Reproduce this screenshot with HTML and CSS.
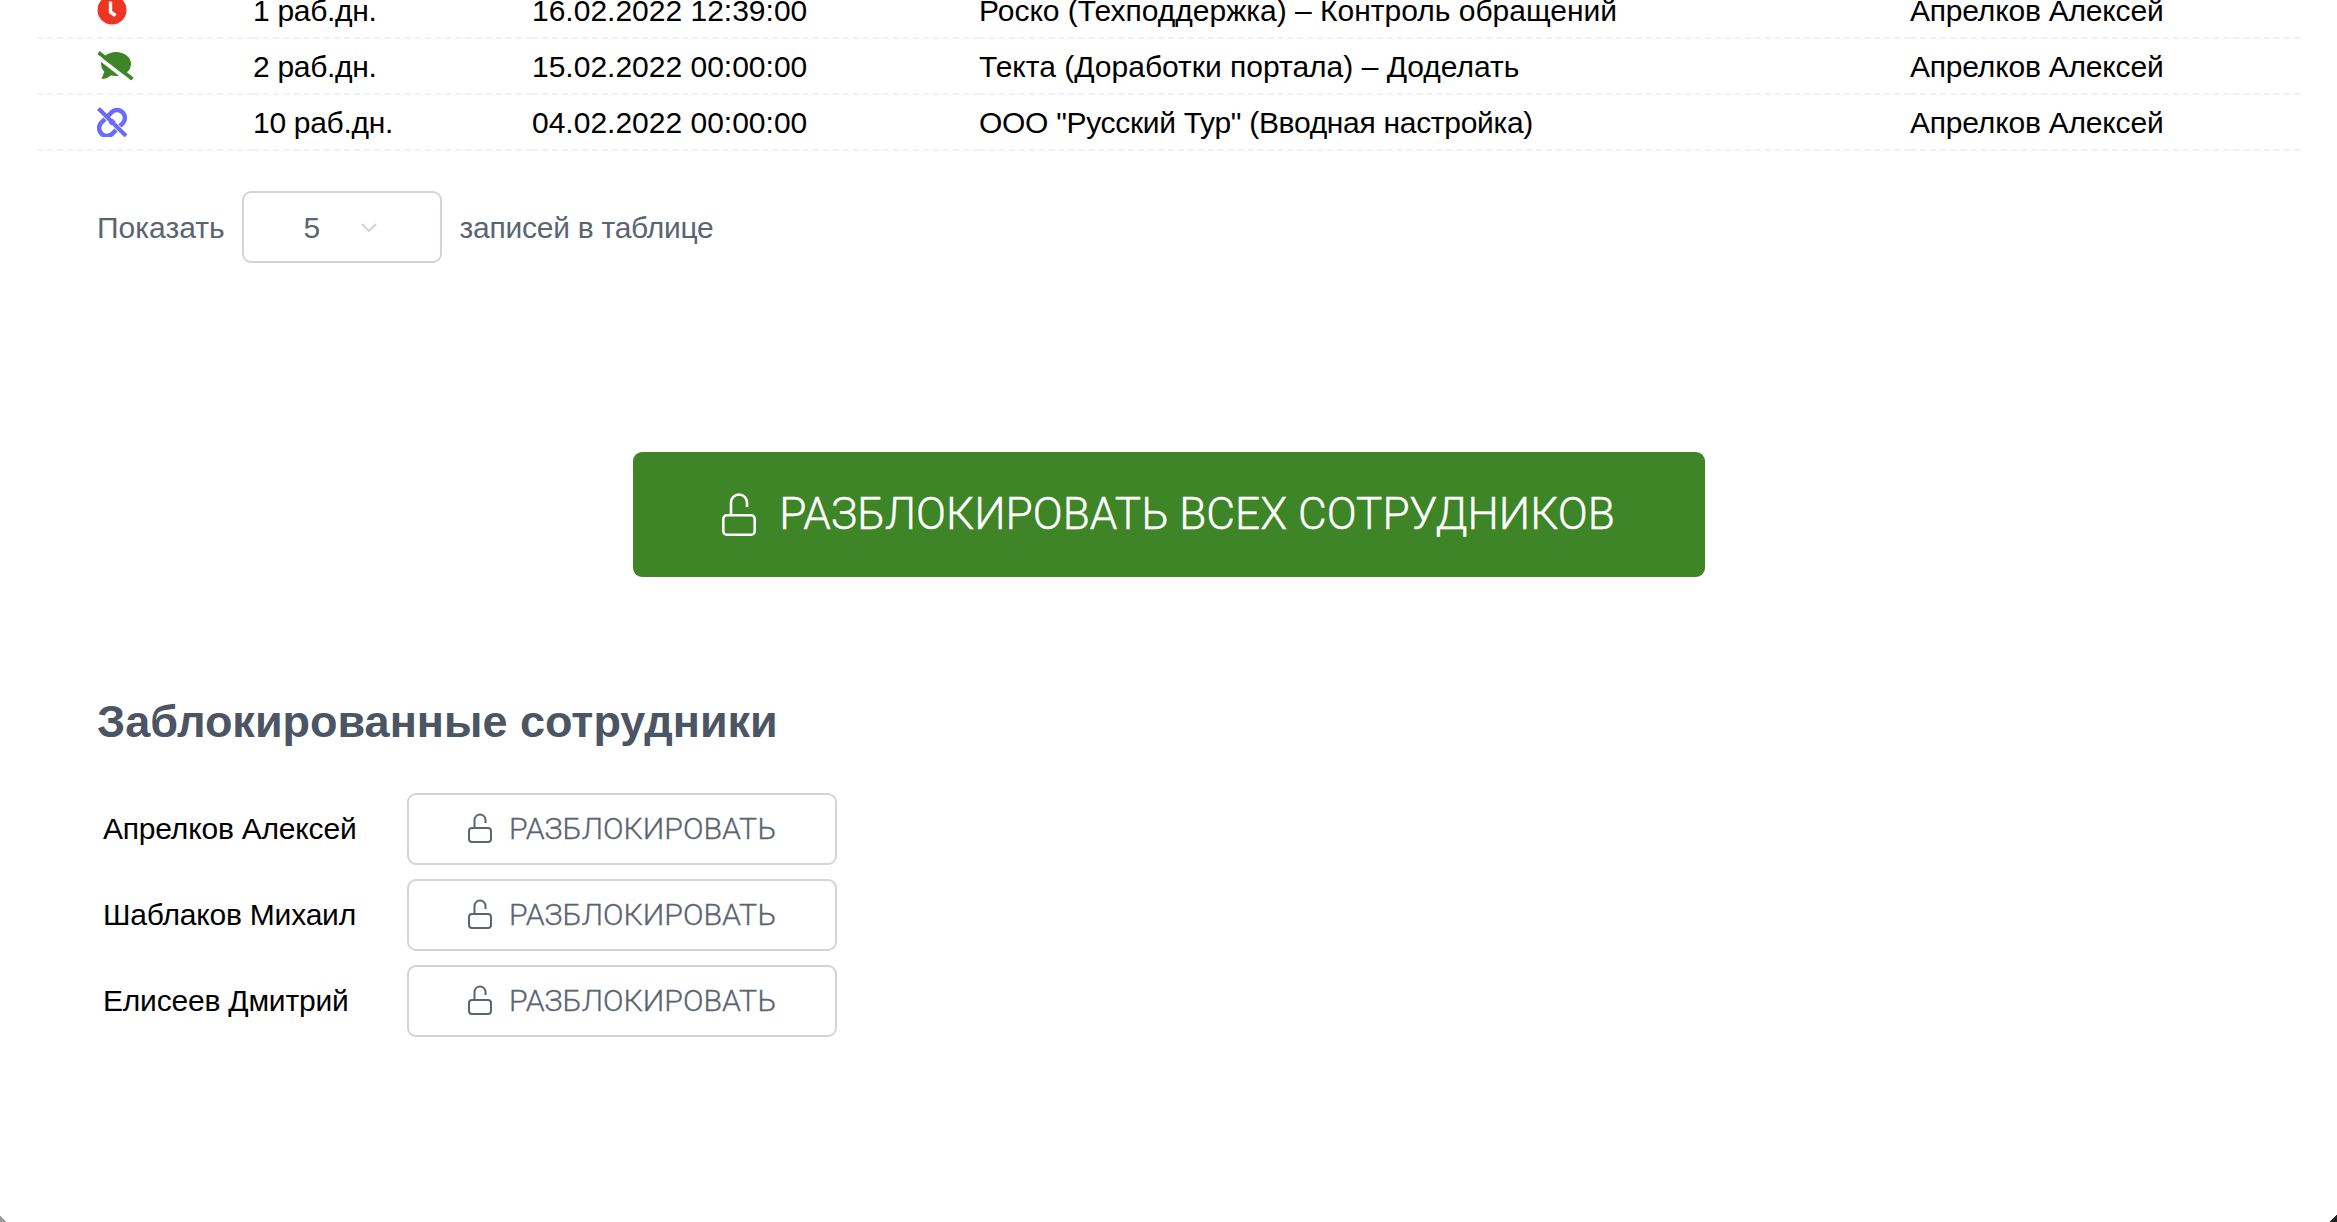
FILE: index.html
```html
<!DOCTYPE html>
<html lang="en">
<head>
    <meta charset="UTF-8">
    <meta name="viewport" content="width=device-width, initial-scale=1.0">
    <title>Заблокированные сотрудники</title>
    <link rel="stylesheet" href="styles.css">
</head>
<body>
    <div class="container">
        <table class="tasks">
            <tr>
                <td class="col-icon">
                    <svg class="status-icon" width="37" height="30" viewBox="0 0 37 30">
                        <circle cx="15" cy="15" r="14.5" fill="#ee3524"/>
                        <path d="M13.5 6.5V17l5 3.5" fill="none" stroke="#fff" stroke-width="3.4"/>
                    </svg>
                </td>
                <td class="col-days">1 раб.дн.</td>
                <td class="col-date">16.02.2022 12:39:00</td>
                <td class="col-task">Роско (Техподдержка) – Контроль обращений</td>
                <td class="col-name">Апрелков Алексей</td>
            </tr>
            <tr>
                <td class="col-icon">
                    <svg class="status-icon" width="37" height="30" viewBox="0 0 37 30">
                        <ellipse cx="19" cy="13" rx="15" ry="12" fill="#3d8526"/>
                        <path d="M8 19L4.5 28C8 28 11 27 14 24.5z" fill="#3d8526"/>
                        <path d="M-1 4.5L32 30" fill="none" stroke="#fff" stroke-width="4"/>
                        <path d="M1.5 1.5L35.5 28" fill="none" stroke="#3d8526" stroke-width="3.5"/>
                    </svg>
                </td>
                <td class="col-days">2 раб.дн.</td>
                <td class="col-date">15.02.2022 00:00:00</td>
                <td class="col-task">Текта (Доработки портала) – Доделать</td>
                <td class="col-name">Апрелков Алексей</td>
            </tr>
            <tr>
                <td class="col-icon">
                    <svg class="status-icon" width="37" height="30" viewBox="0 0 37 30">
                        <path d="M11 9l4-4a7.8 7.8 0 0 1 11 11l-3 3M8 12l-4 4a7.8 7.8 0 0 0 11 11l4-4M13 17l4-4" fill="none" stroke="#6b6bfb" stroke-width="4.5"/>
                        <path d="M1.5 1.5l27.5 27.5" fill="none" stroke="#6b6bfb" stroke-width="4"/>
                    </svg>
                </td>
                <td class="col-days">10 раб.дн.</td>
                <td class="col-date">04.02.2022 00:00:00</td>
                <td class="col-task col-task-tight">ООО "Русский Тур" (Вводная настройка)</td>
                <td class="col-name">Апрелков Алексей</td>
            </tr>
        </table>

        <div class="page-size">
            <span>Показать</span>
            <div class="select">
                <span>5</span>
                <svg width="16" height="9" viewBox="0 0 16 9"><path d="M1 1l7 7 7-7" fill="none" stroke="#d1d5db" stroke-width="2"/></svg>
            </div>
            <span class="page-size-tail">записей в таблице</span>
        </div>

        <div class="unlock-all-wrap">
            <button class="btn-unlock-all" type="button">
                <svg width="34" height="44" viewBox="0 0 34 44"><rect x="1.3" y="23.3" width="31.4" height="19.4" rx="3.5" fill="none" stroke="#fff" stroke-width="2.6"/><path d="M9 23V10.5a8 8 0 0 1 16 0V15" fill="none" stroke="#fff" stroke-width="2.6"/></svg>
                РАЗБЛОКИРОВАТЬ ВСЕХ СОТРУДНИКОВ
            </button>
        </div>

        <h2>Заблокированные сотрудники</h2>
        <div class="blocked">
            <div class="blocked-row">
                <span class="blocked-name">Апрелков Алексей</span>
                <button class="btn-unlock" type="button">
                    <svg width="24" height="30" viewBox="0 0 24 30"><rect x="1" y="15" width="22" height="14" rx="3" fill="none" stroke="#5b6472" stroke-width="2"/><path d="M6.5 15V7a5.5 5.5 0 0 1 11 0v3" fill="none" stroke="#5b6472" stroke-width="2"/></svg>
                    РАЗБЛОКИРОВАТЬ
                </button>
            </div>
            <div class="blocked-row">
                <span class="blocked-name">Шаблаков Михаил</span>
                <button class="btn-unlock" type="button">
                    <svg width="24" height="30" viewBox="0 0 24 30"><rect x="1" y="15" width="22" height="14" rx="3" fill="none" stroke="#5b6472" stroke-width="2"/><path d="M6.5 15V7a5.5 5.5 0 0 1 11 0v3" fill="none" stroke="#5b6472" stroke-width="2"/></svg>
                    РАЗБЛОКИРОВАТЬ
                </button>
            </div>
            <div class="blocked-row">
                <span class="blocked-name">Елисеев Дмитрий</span>
                <button class="btn-unlock" type="button">
                    <svg width="24" height="30" viewBox="0 0 24 30"><rect x="1" y="15" width="22" height="14" rx="3" fill="none" stroke="#5b6472" stroke-width="2"/><path d="M6.5 15V7a5.5 5.5 0 0 1 11 0v3" fill="none" stroke="#5b6472" stroke-width="2"/></svg>
                    РАЗБЛОКИРОВАТЬ
                </button>
            </div>
        </div>
    </div>
    <div class="corner corner-left"></div>
    <div class="corner corner-right"></div>
</body>
</html>
```

FILE: styles.css
```css
html, body {
    height: 100%;
}
body {
    margin: 0;
    position: relative;
    overflow: hidden;
    background: #fff;
    color: #000;
    font-family: "Liberation Sans", Arial, sans-serif;
    font-size: 30px;
}
.container {
    padding: 0 37px;
}
.tasks {
    width: 2263px;
    margin-top: -17px;
    table-layout: fixed;
    border-collapse: collapse;
}
.tasks tr {
    border-bottom: 2px dashed #eef1f5;
}
.tasks td {
    height: 52px;
    padding: 2px 0 0;
    white-space: nowrap;
}
.tasks .col-icon {
    width: 216px;
    height: 54px;
    padding: 0 0 0 60px;
    box-sizing: border-box;
}
.col-days {
    width: 279px;
    letter-spacing: -0.3px;
}
.col-date {
    width: 447px;
}
.col-task {
    width: 931px;
}
.col-task-tight {
    letter-spacing: -0.3px;
}
.col-name {
    letter-spacing: -0.2px;
}
.status-icon {
    display: block;
}
.page-size {
    display: flex;
    align-items: center;
    gap: 17px;
    margin-top: 40px;
    padding-left: 60px;
    color: #5b6472;
}
.page-size span {
    padding-top: 2px;
}
.page-size-tail {
    margin-left: 1px;
    letter-spacing: -0.25px;
}
.select {
    display: flex;
    align-items: center;
    box-sizing: border-box;
    width: 200px;
    height: 72px;
    padding-left: 60px;
    gap: 41px;
    border: 2px solid #d1d5db;
    border-radius: 9px;
}
.unlock-all-wrap {
    display: flex;
    justify-content: center;
    margin-top: 189px;
}
.btn-unlock-all {
    display: flex;
    align-items: center;
    justify-content: center;
    gap: 23px;
    width: 1072px;
    height: 125px;
    padding: 0 0 2px;
    border: none;
    border-radius: 9px;
    background-color: #3d8526;
    color: white;
    font-family: Roboto, sans-serif;
    font-size: 44.2px;
    font-weight: 300;
    -webkit-text-stroke: 0.4px #fff;
}
h2 {
    margin: 119px 0 0;
    padding-left: 60px;
    color: #4b5563;
    font-size: 45px;
    line-height: 52px;
}
.blocked {
    margin-top: 45px;
}
.blocked-row {
    display: flex;
    align-items: center;
    height: 72px;
    margin-bottom: 14px;
    padding-left: 66px;
}
.blocked-name {
    width: 304px;
    letter-spacing: -0.2px;
}
.btn-unlock {
    display: flex;
    align-items: center;
    justify-content: center;
    gap: 17px;
    box-sizing: border-box;
    width: 430px;
    height: 72px;
    padding: 0 0 2px;
    border: 2px solid #d1d5db;
    border-radius: 9px;
    background: #fff;
    color: #5b6472;
    font-family: Roboto, sans-serif;
    font-size: 30.3px;
    font-weight: 300;
    -webkit-text-stroke: 0.3px #5b6472;
}
.corner {
    position: absolute;
    bottom: 0;
    width: 7px;
    height: 7px;
}
.corner-left {
    left: 0;
    background: linear-gradient(to top right, #999 50%, transparent 50%);
}
.corner-right {
    right: 0;
    background: linear-gradient(to top left, #222 50%, transparent 50%);
}
```
